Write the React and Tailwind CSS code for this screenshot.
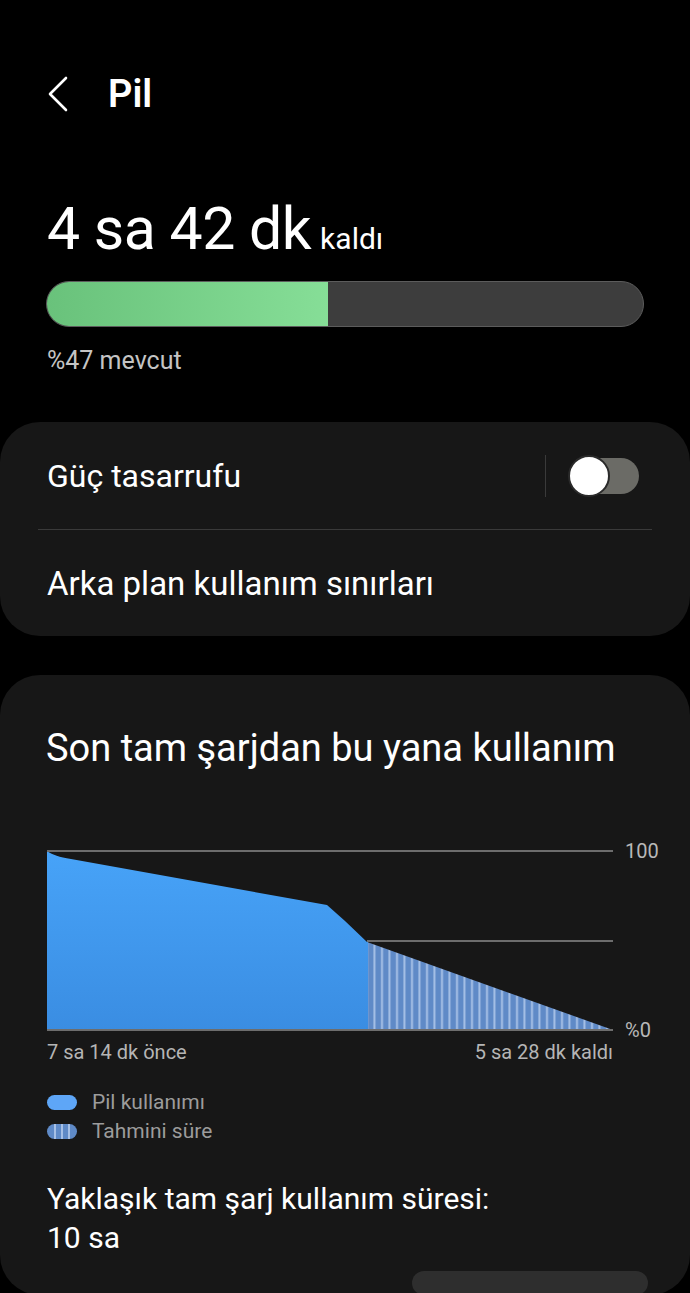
import React from 'react';

const font = { fontFamily: 'Roboto, "Noto Sans", sans-serif' };

function BackIcon() {
    return (
        <svg width="24" height="36" viewBox="0 0 24 36" fill="none">
            <path d="M20 2 L4 18 L20 34" stroke="#ffffff" strokeWidth="2.6" strokeLinecap="round" strokeLinejoin="round" />
        </svg>
    );
}

function Toggle() {
    return (
        <div className="relative w-[72px] h-[42px] flex items-center">
            <div className="ml-[3px] w-[68px] h-[36px] rounded-full bg-[#6b6b66]" />
            <div className="absolute left-0 top-0 w-[42px] h-[42px] rounded-full bg-white border-2 border-[#2a2a2a]" />
        </div>
    );
}

// usage chart: solid history + striped estimate
function UsageChart() {
    return (
        <svg width="566" height="200" viewBox="0 0 566 200" className="block shrink-0">
            <defs>
                <linearGradient id="used" x1="0" y1="0" x2="0" y2="1">
                    <stop offset="0" stopColor="#47a3f8" />
                    <stop offset="1" stopColor="#3a8de2" />
                </linearGradient>
                <pattern id="stripes" width="7.5" height="10" patternUnits="userSpaceOnUse">
                    <rect width="7.5" height="10" fill="#5f8ac7" />
                    <rect x="4" width="2" height="10" fill="#a6c0e6" />
                </pattern>
            </defs>
            <path d="M320 101 L566 189 L320 189 Z" fill="url(#stripes)" />
            <path
                d="M0 10 C6 14 12 16 24 18 L280 64 L298 80 L320 101 L321 101 L321 189 L0 189 Z"
                fill="url(#used)"
            />
            <line x1="0" y1="10" x2="566" y2="10" stroke="#6d6d6d" strokeWidth="2" />
            <line x1="320" y1="100" x2="566" y2="100" stroke="#6d6d6d" strokeWidth="2" />
            <line x1="0" y1="189" x2="566" y2="189" stroke="#6d6d6d" strokeWidth="2" />
        </svg>
    );
}

export default function App() {
    return (
        <div className="w-[690px] h-[1293px] bg-black overflow-hidden text-white" style={font}>
            {/* Header */}
            <div className="flex items-center h-[48px] mt-[70px] pl-[46px]">
                <BackIcon />
                <span className="ml-[38px] text-[38px] font-semibold leading-none">Pil</span>
            </div>

            {/* Remaining time */}
            <div className="mt-[81px] pl-[47px] flex items-baseline">
                <span className="text-[59px] leading-none font-normal tracking-[-0.5px]">4 sa 42 dk</span>
                <span className="ml-[9px] text-[30px] leading-none">kaldı</span>
            </div>

            <div className="mx-[46px] mt-[23px] h-[46px] rounded-full bg-[#3d3d3d] border border-[#5c5c5c] overflow-hidden flex">
                <div className="w-[281px] h-full bg-gradient-to-r from-[#69c27b] to-[#86de97]" />
            </div>

            <div className="pl-[47px] mt-[21px] text-[25px] text-[#c4c4c4] leading-none">%47 mevcut</div>

            {/* Settings card */}
            <div className="mt-[49px] bg-[#171717] rounded-[40px] h-[214px] flex flex-col">
                <div className="h-[107px] flex items-center pl-[47px] pr-[50px]">
                    <span className="flex-1 text-[32px] leading-none">Güç tasarrufu</span>
                    <div className="w-[1px] h-[42px] bg-[#3a3a3a] mr-[22px]" />
                    <Toggle />
                </div>
                <div className="mx-[38px] h-[1px] bg-[#3a3a3a]" />
                <div className="flex-1 flex items-center pl-[47px] text-[33px] leading-none">Arka plan kullanım sınırları</div>
            </div>

            {/* Usage card */}
            <div className="mt-[39px] bg-[#171717] rounded-[40px] h-[620px] overflow-hidden flex flex-col">
                <div className="pt-[54px] pl-[46px] text-[38px] leading-none">Son tam şarjdan bu yana kullanım</div>

                <div className="mt-[74px] pl-[47px] flex">
                    <UsageChart />
                    <div className="ml-[12px] h-[200px] flex flex-col justify-between text-[20px] leading-[20px] text-[#b8b8b8]">
                        <span>100</span>
                        <span className="mb-[1px]">%0</span>
                    </div>
                </div>

                <div className="flex justify-between pl-[47px] w-[613px] text-[20px] text-[#b5b5b5] leading-none mt-[1px]">
                    <span>7 sa 14 dk önce</span>
                    <span>5 sa 28 dk kaldı</span>
                </div>

                <div className="mt-[30px] pl-[47px] flex flex-col gap-[8px] text-[21px] text-[#9c9c9c] leading-none">
                    <div className="flex items-center gap-[15px]">
                        <div className="w-[30px] h-[15px] rounded-full bg-[#5ea6f7]" />
                        <span>Pil kullanımı</span>
                    </div>
                    <div className="flex items-center gap-[15px]">
                        <div className="w-[30px] h-[15px] rounded-full bg-[#5f8ac7] flex justify-center gap-[5px] overflow-hidden">
                            <div className="w-[2px] h-full bg-[#a6c0e6]" />
                            <div className="w-[2px] h-full bg-[#a6c0e6]" />
                            <div className="w-[2px] h-full bg-[#a6c0e6]" />
                        </div>
                        <span>Tahmini süre</span>
                    </div>
                </div>

                <div className="mt-[37px] pl-[47px] text-[30px] leading-[39px]">
                    <div>Yaklaşık tam şarj kullanım süresi:</div>
                    <div>10 sa</div>
                </div>

                <div className="mt-[14px] self-end mr-[42px] w-[236px] h-[60px] rounded-[28px] bg-[#2e2e2e]" />
            </div>
        </div>
    );
}
